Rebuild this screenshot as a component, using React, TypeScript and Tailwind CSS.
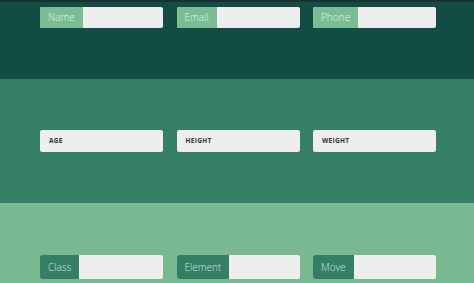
const top = ["Name", "Email", "Phone"]
const mid = ["AGE", "HEIGHT", "WEIGHT"]
const bottom = ["Class", "Element", "Move"]

function LabeledInput({ label, tone }: { label: string; tone: "light" | "dark" }) {
  const labelCls =
    tone === "light"
      ? "bg-[#7bbd93] text-[#e4f2ea]"
      : "bg-[#357f69] text-[#cfe6da]"
  return (
    <div className="flex w-[123px] rounded-[2px] overflow-hidden bg-[#eeeeee] h-full">
      <span className={`flex items-center px-[8px] text-[10px] font-light ${labelCls}`}>{label}</span>
      <span className="flex-1" />
    </div>
  )
}

export default function App() {
  return (
    <div className="w-[474px] h-[283px] overflow-hidden font-['Open_Sans',sans-serif]">
      <section className="h-[79px] bg-[#134b45] border-t-2 border-[#1c302c] pt-[5px]">
        <div className="flex gap-[13.5px] pl-[40px] h-[21px]">
          {top.map((l) => (
            <LabeledInput key={l} label={l} tone="light" />
          ))}
        </div>
      </section>

      <section className="h-[124px] bg-[#357f69] flex items-center">
        <div className="flex gap-[13.5px] pl-[40px] h-[22px]">
          {mid.map((l) => (
            <div
              key={l}
              className="w-[123px] rounded-[2px] bg-[#eeeeee] flex items-center pl-[9px] text-[6.5px] font-bold tracking-[0.3px] text-[#333333]"
            >
              {l}
            </div>
          ))}
        </div>
      </section>

      <section className="h-[80px] bg-[#79b890] pt-[52px]">
        <div className="flex gap-[13.5px] pl-[40px] h-[24px]">
          {bottom.map((l) => (
            <LabeledInput key={l} label={l} tone="dark" />
          ))}
        </div>
      </section>
    </div>
  )
}
